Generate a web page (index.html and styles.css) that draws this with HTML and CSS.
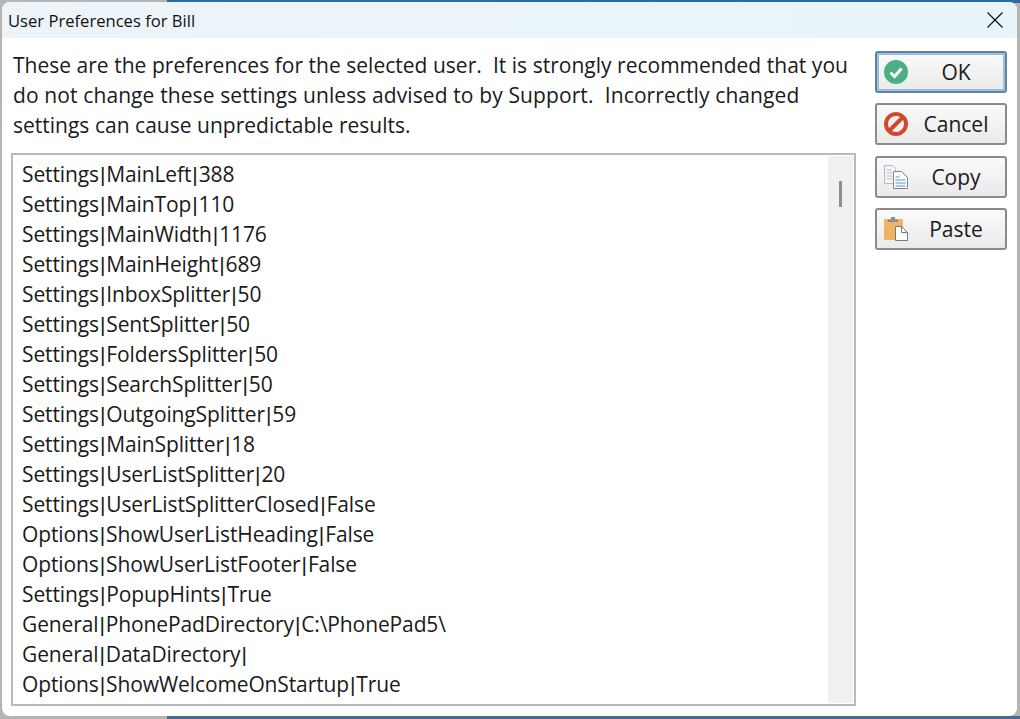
FILE: index.html
```html
<!DOCTYPE html>
<html lang="en">
<head>
<meta charset="utf-8">
<title>User Preferences for Bill</title>
<link rel="stylesheet" href="styles.css">
</head>
<body>
<div class="desktop">
  <div class="window">
    <header class="titlebar">
      <span class="title">User Preferences for Bill</span>
      <svg class="close" viewBox="0 0 16 16" width="16" height="16"><path d="M.5.5l15 15M15.500.5l-15 15" stroke="#111" stroke-width="1.200" fill="none"/></svg>
    </header>
    <div class="content">
      <main class="main">
        <p class="intro">These are the preferences for the selected user.&nbsp; It is strongly recommended that you<br><span class="intro-wide">do not change these settings unless advised to by Support.&nbsp; Incorrectly changed</span><br>settings can cause unpredictable results.</p>
        <div class="listbox">
          <ul class="items">
            <li>Settings<span class="sep">|</span>MainLeft<span class="sep">|</span>388</li>
            <li>Settings<span class="sep">|</span>MainTop<span class="sep">|</span>110</li>
            <li>Settings<span class="sep">|</span>MainWidth<span class="sep">|</span>1176</li>
            <li>Settings<span class="sep">|</span>MainHeight<span class="sep">|</span>689</li>
            <li>Settings<span class="sep">|</span>InboxSplitter<span class="sep">|</span>50</li>
            <li>Settings<span class="sep">|</span>SentSplitter<span class="sep">|</span>50</li>
            <li>Settings<span class="sep">|</span>FoldersSplitter<span class="sep">|</span>50</li>
            <li>Settings<span class="sep">|</span>SearchSplitter<span class="sep">|</span>50</li>
            <li>Settings<span class="sep">|</span>OutgoingSplitter<span class="sep">|</span>59</li>
            <li>Settings<span class="sep">|</span>MainSplitter<span class="sep">|</span>18</li>
            <li>Settings<span class="sep">|</span>UserListSplitter<span class="sep">|</span>20</li>
            <li>Settings<span class="sep">|</span>UserListSplitterClosed<span class="sep">|</span>False</li>
            <li>Options<span class="sep">|</span>ShowUserListHeading<span class="sep">|</span>False</li>
            <li>Options<span class="sep">|</span>ShowUserListFooter<span class="sep">|</span>False</li>
            <li>Settings<span class="sep">|</span>PopupHints<span class="sep">|</span>True</li>
            <li>General<span class="sep">|</span>PhonePadDirectory<span class="sep">|</span>C:\PhonePad5\</li>
            <li>General<span class="sep">|</span>DataDirectory<span class="sep">|</span></li>
            <li>Options<span class="sep">|</span>ShowWelcomeOnStartup<span class="sep">|</span>True</li>
          </ul>
          <div class="scrollbar"><div class="thumb"></div></div>
        </div>
      </main>
      <aside class="buttons">
        <button class="btn btn-default">
          <svg class="icon" viewBox="0 0 24 24" width="24" height="24"><circle cx="12" cy="12" r="12" fill="#4caf83"/><path d="M6.500 12.500l4 4 7-8" fill="none" stroke="#fff" stroke-width="3"/></svg>
          <span class="label">OK</span>
        </button>
        <button class="btn">
          <svg class="icon" viewBox="0 0 24 24" width="24" height="24"><circle cx="12" cy="12" r="10" fill="none" stroke="#d24a2c" stroke-width="4"/><path d="M5 19L19 5" stroke="#d24a2c" stroke-width="4"/></svg>
          <span class="label">Cancel</span>
        </button>
        <button class="btn">
          <svg class="icon" viewBox="0 0 24 24" width="24" height="24">
            <path d="M.5.5h8l3 3v15H.5z" fill="#f4f6f8" stroke="#b5b9bd"/>
            <path d="M2.500 5h5M2.500 8h6M2.500 11h6M2.500 14h6" stroke="#a9c2dc"/>
            <path d="M9.500 6.500h8l6 6v11h-14z" fill="#fff" stroke="#808488"/>
            <path d="M11.500 15h10M11.500 18h10M11.500 21h10M11.500 12h4" stroke="#4b93d3" stroke-width="1.200"/>
          </svg>
          <span class="label">Copy</span>
        </button>
        <button class="btn">
          <svg class="icon" viewBox="0 0 24 24" width="24" height="24">
            <rect x="0" y="2" width="19" height="21" rx="1" fill="#f2b263"/>
            <path d="M4 5V2.500h3V0h4v2.500h3V5z" fill="#8f8f8f"/>
            <path d="M11.500 9.500h6l6 6v8h-12z" fill="#fff" stroke="#77797b"/>
            <path d="M17.500 9.500v6h6" fill="none" stroke="#77797b"/>
          </svg>
          <span class="label">Paste</span>
        </button>
      </aside>
    </div>
  </div>
</div>
</body>
</html>
```

FILE: styles.css
```css
* { box-sizing: border-box; }
html, body { margin: 0; height: 100%; overflow: hidden; }
body { font-family: "Open Sans", "Noto Sans", sans-serif; color: #1a1a1a; }
.desktop {
  width: 1020px;
  height: 719px;
  padding: 2px 3px 3px 2px;
  background:
    linear-gradient(#2d6b9f, #2d6b9f) 167px 0 / 100% 3px no-repeat,
    linear-gradient(#4a6a8a, #4a6a8a) 167px 716px / 100% 3px no-repeat,
    #b4b4b4;
}
.window {
  height: 100%;
  background: #fff;
  border-radius: 8px;
  overflow: hidden;
  display: flex;
  flex-direction: column;
}
.titlebar {
  height: 36px;
  flex: none;
  display: flex;
  align-items: center;
  justify-content: space-between;
  padding: 0 14px 0 6px;
  background: linear-gradient(90deg, #edf4f9, #e7f5f8);
}
.title { font-size: 16.6px; color: #111; }
.content { flex: 1; display: flex; padding: 12px 10px 10px 9px; gap: 19px; min-height: 0; }
.main { flex: 1; display: flex; flex-direction: column; min-width: 0; }
.intro { margin: 0 0 13px; padding-left: 2px; font-size: 21px; line-height: 30px; white-space: nowrap; word-spacing: .12px; }
.intro-wide { letter-spacing: .09px; }
.listbox {
  flex: 1;
  min-height: 0;
  display: flex;
  background: #fff;
  border: 2px solid #b9b9b9;
  padding: 1px;
  overflow: hidden;
}
.items {
  flex: 1;
  list-style: none;
  margin: 0;
  padding: 3px 8px;
  font-size: 21px;
  letter-spacing: -.12px;
  overflow: hidden;
  white-space: nowrap;
}
.items li { height: 30px; line-height: 30px; }
.sep { font-family: "Liberation Sans", sans-serif; margin: 0 1px; line-height: 1; }
.scrollbar {
  width: 25px;
  flex: none;
  background: #f0f0f0;
  padding: 25px 0 0 11px;
}
.thumb { width: 3px; height: 26px; background: #8f8f8f; }
.buttons { width: 132px; flex: none; display: flex; flex-direction: column; gap: 10.3px; padding-top: 1px; }
.btn {
  height: 42px;
  flex: none;
  display: flex;
  align-items: center;
  padding: 0 1px 0 7px;
  background: linear-gradient(#fafafa, #eaeaea);
  border: 2px solid #8b8b8b;
  border-radius: 3px;
  font: inherit;
  font-size: 21px;
  color: #1a1a1a;
}
.btn-default { border-color: #6d7f92; box-shadow: inset 0 0 0 2px #8fc3ee; }
.icon { flex: none; }
.label { flex: 1; text-align: center; }
```
